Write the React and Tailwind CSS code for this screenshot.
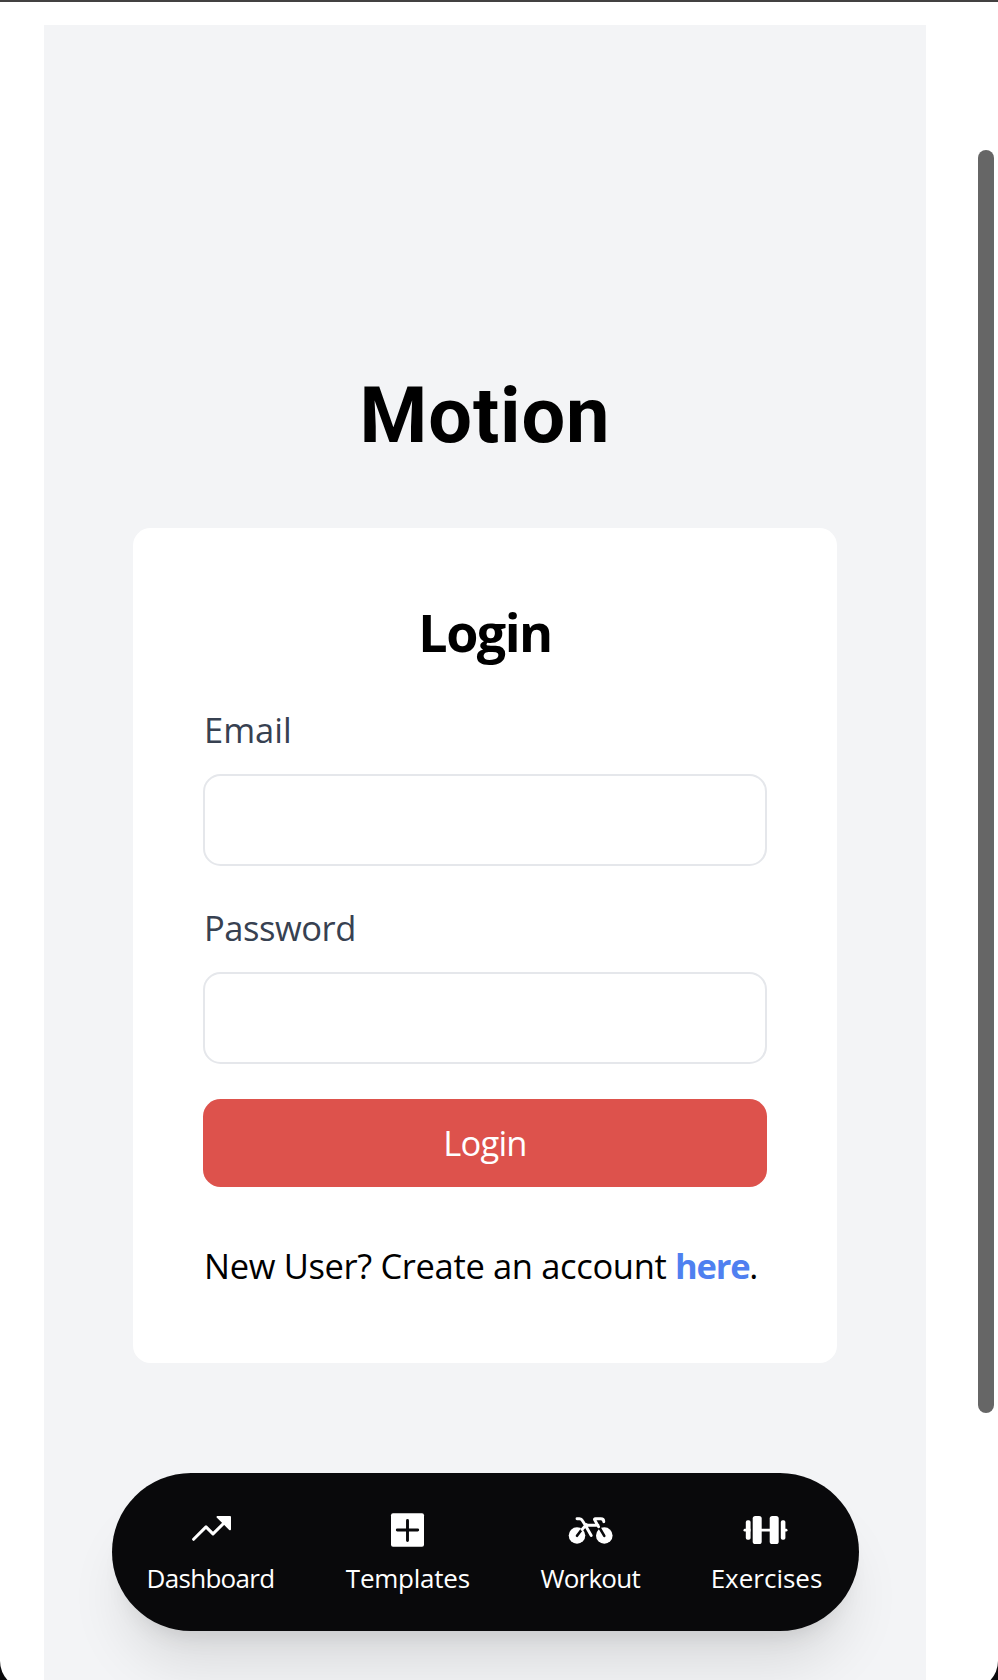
function Icon({ children }) {
  return (
    <svg viewBox="0 0 60 44" className="h-[44px] w-[60px]" fill="currentColor" aria-hidden="true">
      {children}
    </svg>
  );
}

function TrendIcon() {
  return (
    <Icon>
      <path d="M12.600 31.300 25 18.900l7 7L45 13" fill="none" stroke="currentColor" strokeWidth="3" strokeLinecap="round" strokeLinejoin="round" />
      <path d="M36.600 8h12.400a1 1 0 0 1 1 1V21.200c0 1-1.100 1.400-1.800.7L35.900 9.700C35.200 9 35.600 8 36.600 8Z" />
    </Icon>
  );
}

function PlusIcon() {
  return (
    <Icon>
      <rect x="13" y="5.200" width="33" height="33.500" rx="2" />
      <path d="M29.500 12.400v20.200M19.300 22h20.400" fill="none" stroke="#09090b" strokeWidth="2.900" strokeLinecap="round" />
    </Icon>
  );
}

function BikeIcon() {
  return (
    <Icon>
      <circle cx="17" cy="27.500" r="8.300" />
      <circle cx="44.300" cy="27.500" r="8.300" />
      <path d="m17 27.800 7-9.300M44.300 27.800 38.500 18" fill="none" stroke="#09090b" strokeWidth="2.600" strokeLinecap="round" />
      <path d="M17 10.800h2.500c1.700 0 2.300.6 3 1.900l3 4.800L31.200 27.500M25 17.200h13M22 21.500l4.500-5M43.800 13.800c0-2-1-3-3-3h-5.500c-.7 0-1 .5-.7 1l4 7" fill="none" stroke="currentColor" strokeWidth="2.900" strokeLinecap="round" strokeLinejoin="round" />
    </Icon>
  );
}

function BarbellIcon() {
  return (
    <Icon>
      <rect x="7.500" y="20.800" width="44" height="2.800" rx="1.400" />
      <path d="M14.500 8h3v28h-3zM42 8h3v28h-3z" fill="#09090b" />
      <rect x="9.800" y="12.300" width="4.800" height="19.400" rx="1.800" />
      <rect x="16.700" y="8" width="9" height="28" rx="2.600" />
      <rect x="33.700" y="8" width="9" height="28" rx="2.600" />
      <rect x="44.800" y="12.300" width="4.600" height="19.400" rx="1.800" />
    </Icon>
  );
}

function NavItem({ label, className, children }) {
  return (
    <a href="#" className={"flex flex-col items-center " + className}>
      {children}
      <span className="mt-[8px] whitespace-nowrap text-[26px] leading-[36px]">{label}</span>
    </a>
  );
}

function Field({ label, type, labelClass }) {
  return (
    <label className="mt-[35px] flex flex-col">
      <span className={"ml-px h-[53px] text-[34.5px] leading-[53px] text-[#374151] " + labelClass}>{label}</span>
      <input type={type} className="mt-[18px] h-[92px] w-full rounded-[17.6px] border-2 border-[#e5e7eb]" />
    </label>
  );
}

export default function App() {
  return (
    <div className="h-[1680px] w-[998px] overflow-hidden bg-[#09090b] font-['Open_Sans',sans-serif]">
      <div className="flex h-[1689px] w-[998px] overflow-hidden rounded-b-[28px] border-t-2 border-[#434141] bg-white pl-[44px] pt-[23px]">
        <main className="flex h-[1655px] w-[882px] shrink-0 flex-col items-center overflow-hidden bg-[#f3f4f6] text-black">
          <h1 className="mt-[336px] h-[110px] font-['Roboto',sans-serif] text-[77.5px] font-bold leading-[110px] tracking-[0.9px]">Motion</h1>
          <section className="mt-[57px] flex h-[835px] w-[704px] shrink-0 flex-col rounded-[17.6px] bg-white px-[70px] pt-[70px]">
            <h2 className="h-[70px] text-center text-[52px] font-bold leading-[68px] tracking-[-1.5px]">Login</h2>
            <Field label="Email" type="email" labelClass="" />
            <Field label="Password" type="password" labelClass="tracking-[-0.45px]" />
            <button className="mt-[35px] h-[88px] w-full rounded-[17.6px] bg-[#dd524c] pb-px text-[34.5px] tracking-[-0.8px] text-white">Login</button>
            <p className="ml-px mt-[52px] whitespace-nowrap text-[34.5px] leading-[53px] tracking-[-0.35px]">
              New User? Create an account <a href="#" className="font-bold tracking-[-1.2px] text-[#4f80f0]">here</a>.
            </p>
          </section>
          <nav className="mt-[110px] flex h-[158px] w-[747px] shrink-0 justify-between rounded-full bg-[#09090b] px-[35px] pt-[35px] text-white shadow-[0_44px_55px_-11px_rgba(0,0,0,0.1),0_17.6px_22px_-13.2px_rgba(0,0,0,0.1)]">
            <NavItem label="Dashboard" className="w-[128px] tracking-[-0.7px]"><TrendIcon /></NavItem>
            <NavItem label="Templates" className="ml-[2px] w-[126px] tracking-[-0.25px]"><PlusIcon /></NavItem>
            <NavItem label="Workout" className="w-[102px] tracking-[-0.75px]"><BikeIcon /></NavItem>
            <NavItem label="Exercises" className="w-[114px]"><BarbellIcon /></NavItem>
          </nav>
        </main>
        <div className="ml-[52px] mt-[125px] h-[1263px] w-[16px] shrink-0 rounded-full bg-[#666666]" />
      </div>
    </div>
  );
}
